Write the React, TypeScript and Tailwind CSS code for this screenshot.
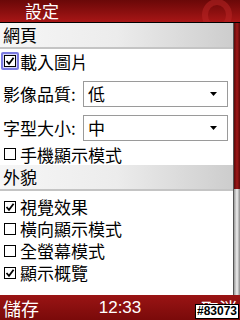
import React from 'react'

const font = { fontFamily: '"Noto Sans CJK TC", "Noto Sans", sans-serif' }

function Box({ checked, focus }: { checked?: boolean; focus?: boolean }) {
  const box = (
    <span className="flex h-[12px] w-[12px] items-center justify-center border border-black bg-white">
      {checked && (
        <svg width="10" height="10" viewBox="0 0 10 10">
          <path d="M1.5 5 L4 7.8 L8.6 1.8" fill="none" stroke="#000" strokeWidth="1.8" />
        </svg>
      )}
    </span>
  )
  if (focus) {
    return (
      <span className="flex h-[18px] w-[18px] items-center justify-center rounded-[2px] border-2 border-[#7b7be0] bg-[#d8d8f8]">
        {box}
      </span>
    )
  }
  return <span className="flex w-[18px] justify-center">{box}</span>
}

function CheckRow({ label, checked, focus, h = 'h-[22px]' }: { label: string; checked?: boolean; focus?: boolean; h?: string }) {
  return (
    <div className={`flex items-center gap-[1px] pl-[1px] ${h}`}>
      <Box checked={checked} focus={focus} />
      <span className="text-[17px] leading-none text-black">{label}</span>
    </div>
  )
}

function Header({ label, h }: { label: string; h: string }) {
  return (
    <div className={`flex items-center border-b-2 border-[#c4c4c4] bg-gradient-to-r from-[#f6f6f6] via-[#ececec] to-[#cdcdcd] pl-[3px] ${h}`}>
      <span className="text-[17px] leading-none text-black">{label}</span>
    </div>
  )
}

function SelectRow({ label, value, h, mt }: { label: string; value: string; h: string; mt: string }) {
  return (
    <div className={`flex items-start pl-[3px] ${h}`}>
      <span className={`w-[80px] whitespace-nowrap text-[17px] leading-[26px] text-black ${mt}`}>{label}</span>
      <div className={`flex h-[26px] w-[145px] items-center justify-between border border-[#9a9a9a] bg-white pl-[4px] pr-[10px] ${mt}`}>
        <span className="text-[17px] leading-none text-black">{value}</span>
        <svg width="7" height="4" viewBox="0 0 7 4">
          <path d="M0 0 H7 L3.5 4 Z" fill="#000" />
        </svg>
      </div>
    </div>
  )
}

export default function App() {
  return (
    <div className="relative flex h-[320px] w-[240px] flex-col overflow-hidden bg-white" style={font}>
      <div className="relative flex h-[22px] items-center bg-gradient-to-b from-[#6a0808] to-[#a81616] pl-[25px]">
        <span className="text-[17px] leading-none text-white">設定</span>
        <svg className="absolute right-[6px] top-0" width="34" height="22" viewBox="0 0 34 22">
          <ellipse cx="17" cy="15" rx="12" ry="13" fill="none" stroke="#b82424" strokeWidth="6" opacity="0.55" />
        </svg>
      </div>
      <div className="h-[1px] bg-black" />
      <div className="flex h-[273px]">
        <div className="flex flex-1 flex-col">
          <Header label="網頁" h="h-[26px]" />
          <CheckRow label="載入圖片" focus checked h="h-[25px]" />
          <SelectRow label="影像品質:" value="低" h="h-[35px]" mt="mt-[7px]" />
          <SelectRow label="字型大小:" value="中" h="h-[35px]" mt="mt-[6px]" />
          <CheckRow label="手機顯示模式" h="h-[21px]" />
          <Header label="外貌" h="h-[26px]" />
          <div className="h-[5px]" />
          <CheckRow label="視覺效果" checked />
          <CheckRow label="橫向顯示模式" />
          <CheckRow label="全螢幕模式" />
          <CheckRow label="顯示概覽" checked />
        </div>
        <div className="flex w-[7px] flex-col border-l border-[#555] bg-[#e8e8e8]">
          <div className="h-[166px] bg-gradient-to-r from-[#5a0a0a] via-[#a01818] to-[#5a0a0a]" />
          <div className="flex-1 bg-gradient-to-r from-[#9a9a9a] via-[#f0f0f0] to-[#8a8a8a]" />
        </div>
      </div>
      <div className="relative flex h-[25px] items-center justify-between bg-gradient-to-b from-[#9a1414] to-[#7a0a0a] px-[3px]">
        <span className="text-[18px] leading-none text-white">儲存</span>
        <span className="text-[17px] leading-none text-white" style={{ fontFamily: '"Liberation Sans", sans-serif' }}>12:33</span>
        <span className="text-[18px] leading-none text-white">取消</span>
        <span className="absolute bottom-[1px] right-[1px] border border-black bg-white px-[1px] text-[12px] leading-[13px] font-bold text-black" style={{ fontFamily: '"Liberation Sans", sans-serif' }}>
          #83073
        </span>
      </div>
    </div>
  )
}
